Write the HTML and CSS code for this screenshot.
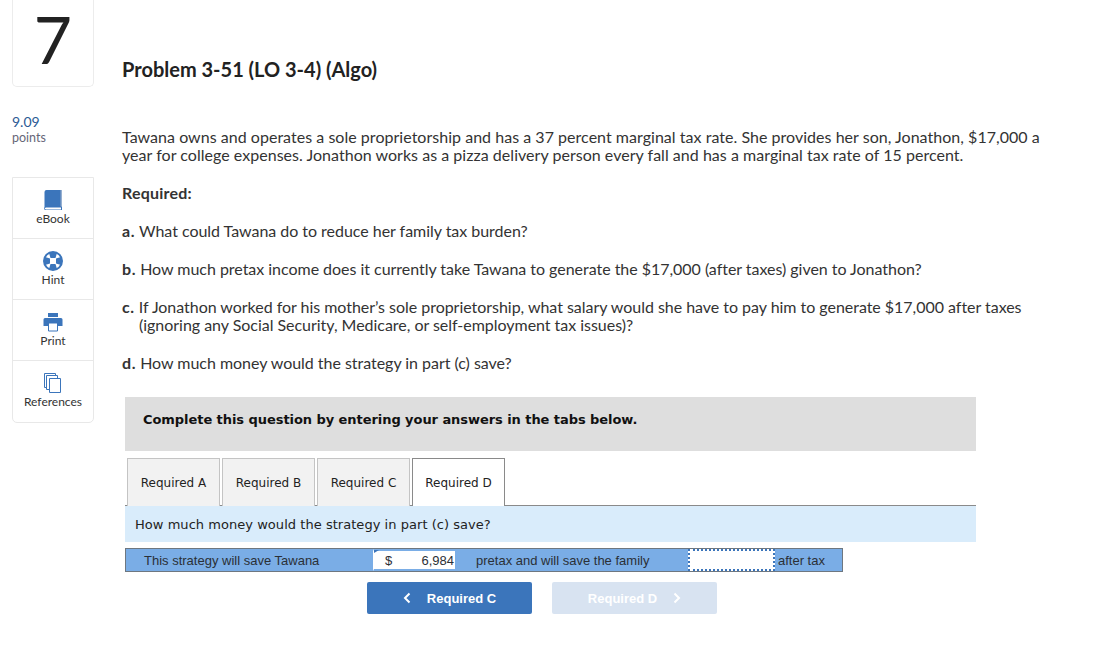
FILE: index.html
```
<!DOCTYPE html>
<html lang="en">
<head>
<meta charset="utf-8">
<title>Problem 3-51</title>
<link rel="stylesheet" href="styles.css">
</head>
<body>
<div class="page">
  <aside class="side">
    <div class="num-box"><span class="num">7</span></div>
    <div class="points"><div class="pts-val">9.09</div><div class="pts-lbl">points</div></div>
    <nav class="tools">
      <div class="tool">
        <svg class="ico" width="18" height="20" viewBox="1 1 17 20"><path d="M1 3a2 2 0 0 1 2-2h14v17H3a2 2 0 0 0-2 2z" fill="#3b75bb"/><path d="M1 19.500a1.500 1.500 0 0 1 1.500-1.500H18v3H2.500A1.500 1.500 0 0 1 1 19.500z" fill="#fff" stroke="#3b75bb"/><path d="M17 1h1v17h-1z" fill="#2f62a3"/></svg>
        <span>eBook</span>
      </div>
      <div class="tool">
        <svg class="ico" width="20" height="20" viewBox="0 0 20 20"><circle cx="10" cy="10" r="9" fill="#fff" stroke="#3b75bb" stroke-width="2"/><path d="M6 2h8l-1.500 5h-5zM6 18h8l-1.500-5h-5zM2 6v8l5-1.500v-5zM18 6v8l-5-1.500v-5z" fill="#3b75bb"/></svg>
        <span>Hint</span>
      </div>
      <div class="tool">
        <svg class="ico" width="20" height="20" viewBox="0 0 20 20"><path d="M5 1h10v4H5z" fill="#3b75bb"/><path d="M2 6h16a1.500 1.500 0 0 1 1.500 1.500V14H15v-3H5v3H.5V7.500A1.500 1.500 0 0 1 2 6z" fill="#3b75bb"/><path d="M5.500 11h9v8h-9z" fill="#fff" stroke="#3b75bb"/></svg>
        <span>Print</span>
      </div>
      <div class="tool">
        <svg class="ico" width="20" height="20" viewBox="0 0 20 20" fill="#fff" stroke="#3b75bb" stroke-width="1"><path d="M1.500 .5h11v14h-11z"/><path d="M3.500 2.500h11v14h-11z"/><path d="M6.500 5.500h11v14h-11z"/></svg>
        <span>References</span>
      </div>
    </nav>
  </aside>
  <main class="main">
    <h1 class="title">Problem 3-51 (LO 3-4) (Algo)</h1>
    <p class="intro">Tawana owns and operates a sole proprietorship and has a 37 percent marginal tax rate. She provides her son, Jonathon, $17,000 a year for college expenses. Jonathon works as a pizza delivery person every fall and has a marginal tax rate of 15 percent.</p>
    <p class="req"><b>Required:</b></p>
    <p class="q"><b>a.</b> What could Tawana do to reduce her family tax burden?</p>
    <p class="q"><b>b.</b> How much pretax income does it currently take Tawana to generate the $17,000 (after taxes) given to Jonathon?</p>
    <p class="q hang"><b>c.</b> If Jonathon worked for his mother’s sole proprietorship, what salary would she have to pay him to generate $17,000 after taxes (ignoring any Social Security, Medicare, or self-employment tax issues)?</p>
    <p class="q"><b>d.</b> How much money would the strategy in part (c) save?</p>
    <section class="work">
      <div class="banner">Complete this question by entering your answers in the tabs below.</div>
      <div class="tabs">
        <div class="tab">Required A</div>
        <div class="tab">Required B</div>
        <div class="tab">Required C</div>
        <div class="tab active">Required D</div>
      </div>
      <div class="prompt">How much money would the strategy in part (c) save?</div>
      <div class="answer">
        <div class="a-lbl first">This strategy will save Tawana</div>
        <div class="a-input filled"><span>$</span><span>6,984</span></div>
        <div class="a-lbl mid">pretax and will save the family</div>
        <div class="a-input focus"></div>
        <div class="a-lbl last">after tax</div>
      </div>
      <div class="nav">
        <div class="btn prev"><svg width="8" height="12" viewBox="0 0 8 12"><path d="M6.500 1.500 2 6l4.500 4.500" fill="none" stroke="#fff" stroke-width="2"/></svg><span>Required C</span></div>
        <div class="btn next"><span>Required D</span><svg width="8" height="12" viewBox="0 0 8 12"><path d="M1.500 1.500 6 6l-4.500 4.500" fill="none" stroke="#fff" stroke-width="2"/></svg></div>
      </div>
    </section>
  </main>
</div>
</body>
</html>
```
FILE: styles.css
```
* { box-sizing: border-box; }
html, body { margin: 0; padding: 0; background: #fff; }
body { width: 1102px; height: 647px; overflow: hidden; font-family: "Lato", "Open Sans", sans-serif; color: #333; }
.page { display: flex; align-items: flex-start; padding-left: 12px; }
.side { width: 82px; flex: none; }
.num-box { height: 87px; border: 1px solid #ececec; border-top: 0; border-radius: 0 0 5px 5px; display: flex; justify-content: center; align-items: flex-start; }
.num { font-size: 66px; line-height: 78px; color: #222; font-family: "Lato", sans-serif; }
.points { margin-top: 27px; height: 63px; }
.pts-val { font-size: 14px; line-height: 16px; color: #2b5a94; }
.pts-lbl { font-size: 12.500px; line-height: 16px; color: #667; }
.tools { border: 1px solid #e8e8e8; border-radius: 0 0 5px 5px; }
.tool { height: 61px; border-bottom: 1px solid #e8e8e8; display: flex; flex-direction: column; align-items: center; padding-top: 12px; font-size: 12px; color: #333; }
.tool:last-child { border-bottom: 0; }
.tool span { line-height: 14px; }
.ico { height: 20px; margin-bottom: 2px; flex: none; }
.main { margin-left: 28px; width: 920px; flex: none; }
.title { margin: 57px 0 0; font-size: 20px; line-height: 24px; font-weight: 700; color: #222; }
.intro { margin: 47px 0 0; font-size: 16px; line-height: 18px; letter-spacing: .03px; }
.req { margin: 20px 0 0; font-size: 16px; line-height: 18px; }
.req b { letter-spacing: .2px; }
.q { margin: 20px 0 0; font-size: 16px; line-height: 18px; letter-spacing: -.03px; }
.q b { letter-spacing: .6px; }
.hang { padding-left: 17px; text-indent: -17px; }
.work { margin-top: 25px; margin-left: 3px; width: 851px; }
.banner { height: 54px; background: #dedede; padding: 0 0 10px 18px; display: flex; align-items: center; font-family: "DejaVu Sans", sans-serif; font-weight: 700; font-size: 13px; letter-spacing: -.06px; color: #111; }
.tabs { margin-top: 7px; padding-left: 2px; height: 48px; display: flex; gap: 2px; border-bottom: 1px solid #8a8a8a; }
.tab { width: 93px; height: 48px; background: #f2f2f2; border: 1px solid #c4c4c4; border-bottom: 0; display: flex; justify-content: center; align-items: center; font-family: "DejaVu Sans", sans-serif; font-size: 12px; color: #222; }
.tab.active { background: #fff; border-color: #8a8a8a; height: 48px; position: relative; }
.prompt { height: 36px; background: #d9ecfb; padding-left: 10px; display: flex; align-items: center; font-family: "DejaVu Sans", sans-serif; font-size: 13px; letter-spacing: .04px; color: #222; }
.answer { margin-top: 6px; width: 718px; height: 24px; display: flex; background: #7aade6; border: 1px solid #6e7780; font-family: "Liberation Sans", sans-serif; font-size: 13px; color: #2b3036; }
.a-lbl { display: flex; align-items: center; }
.first { width: 247px; padding-left: 18px; }
.mid { width: 231px; padding-left: 19px; }
.last { padding-left: 3px; }
.a-input { background: #fff; height: 100%; }
.filled { width: 84px; border: 2px solid #7aade6; border-left: 1px solid #fff; padding: 0 1px 0 11px; display: flex; justify-content: space-between; align-items: center; position: relative; font-size: 13px; }
.filled::before { content: ""; position: absolute; left: 0; top: -1px; border-top: 3px solid #3b75bb; border-right: 5px solid transparent; border-bottom: 3px solid transparent; border-left: 0; }
.focus { width: 87px; border: 2px dotted #3b75bb; }
.nav { margin-top: 10px; margin-left: 242px; display: flex; gap: 20px; }
.btn { width: 165px; height: 32px; border-radius: 2px; display: flex; align-items: center; justify-content: center; gap: 16px; font-family: "Liberation Sans", sans-serif; font-size: 13px; font-weight: 700; color: #fff; }
.prev { background: #3b75bb; }
.next { background: #d8e3f1; }
```
